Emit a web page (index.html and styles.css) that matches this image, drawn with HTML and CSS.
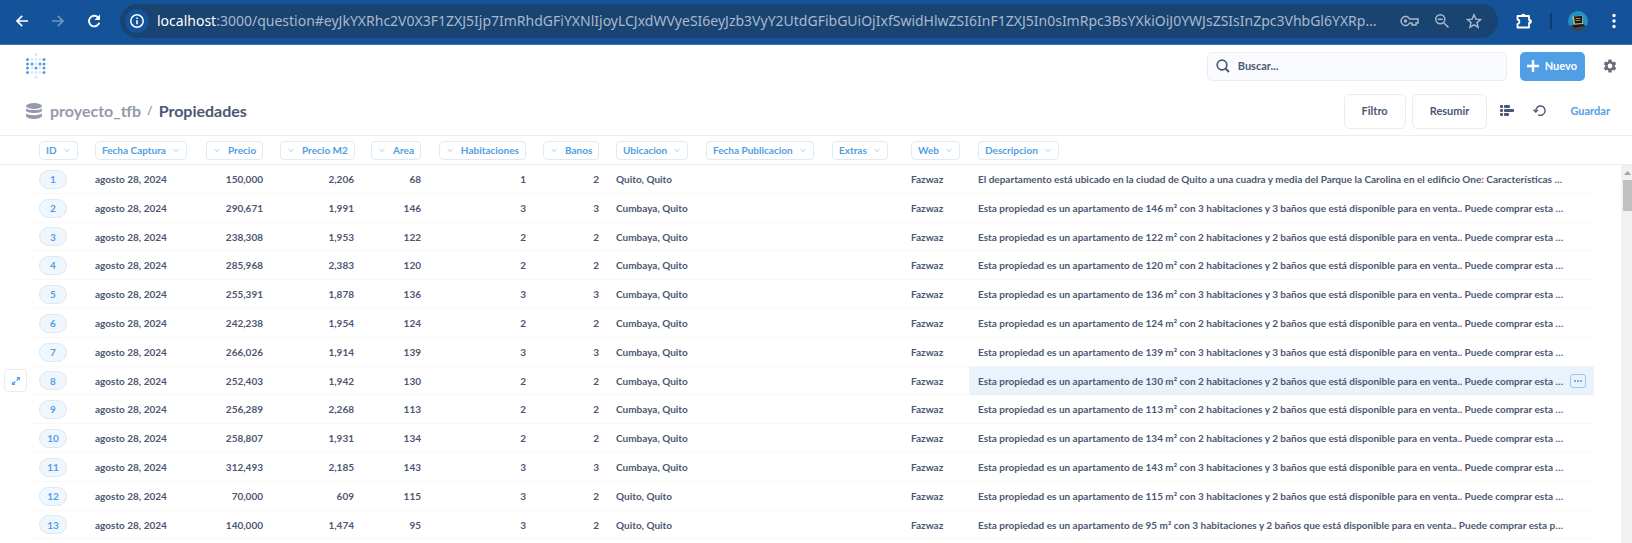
FILE: index.html
```html
<!DOCTYPE html>
<html lang="es">
<head>
<meta charset="utf-8">
<title>Propiedades</title>
<link rel="stylesheet" href="styles.css">
</head>
<body>
<div class="browser">
  <button class="nav-btn" aria-label="Atrás"><svg viewBox="0 0 16 16" width="16" height="16"><path d="M14 8H3M8.200 2.800 3 8l5.200 5.200" fill="none" stroke="currentColor" stroke-width="1.700"/></svg></button>
  <button class="nav-btn dim" aria-label="Adelante"><svg viewBox="0 0 16 16" width="16" height="16"><path d="M2 8h11M7.800 2.800 13 8l-5.200 5.200" fill="none" stroke="currentColor" stroke-width="1.700"/></svg></button>
  <button class="nav-btn" aria-label="Recargar"><svg viewBox="0 0 16 16" width="16" height="16"><path d="M13.300 9.800A5.300 5.300 0 1 1 12 4.300l1 1" fill="none" stroke="currentColor" stroke-width="1.900"/><path d="M14 1.500v5.500H8.500z" fill="currentColor"/></svg></button>
  <div class="omnibox">
    <button class="site-info" aria-label="Información del sitio"><svg viewBox="0 0 16 16" width="16" height="16"><circle cx="8" cy="8" r="6.200" fill="none" stroke="currentColor" stroke-width="1.500"/><path d="M8 7.200v4M8 4.600v1.500" stroke="currentColor" stroke-width="1.600"/></svg></button>
    <div class="url" role="textbox" aria-label="Dirección"><span class="host">localhost</span>:3000/question#eyJkYXRhc2V0X3F1ZXJ5Ijp7ImRhdGFiYXNlIjoyLCJxdWVyeSI6eyJzb3VyY2UtdGFibGUiOjIxfSwidHlwZSI6InF1ZXJ5In0sImRpc3BsYXkiOiJ0YWJsZSIsInZpc3VhbGl6YXRp…</div>
    <button class="omni-btn" aria-label="Contraseñas"><svg viewBox="0 0 20 16" width="20" height="16"><path d="M9.600 6A4.500 4.500 0 1 0 9.600 10H12v2h4v-2h2V6z" fill="none" stroke="currentColor" stroke-width="1.500"/><circle cx="5.500" cy="8" r="1.700" fill="currentColor"/></svg></button>
    <button class="omni-btn" aria-label="Zoom"><svg viewBox="0 0 16 16" width="16" height="16"><path d="M10 10l4.500 4.500M3.800 6.200h5" stroke="currentColor" stroke-width="1.600"/><circle cx="6.300" cy="6.200" r="4.500" fill="none" stroke="currentColor" stroke-width="1.500"/></svg></button>
    <button class="omni-btn" aria-label="Marcador"><svg viewBox="0 0 16 16" width="16" height="16"><path d="M8 1.800l1.900 4.300 4.700.4-3.600 3.100 1.100 4.600L8 11.800l-4.100 2.400L5 9.600 1.400 6.500l4.700-.4z" fill="none" stroke="currentColor" stroke-width="1.400"/></svg></button>
  </div>
  <button class="nav-btn" aria-label="Extensiones"><svg viewBox="0 0 18 18" width="18" height="18"><path d="M2.500 4H14v4h.5a1.500 1.500 0 0 1 0 3H14v4.500H2.500V12c2.500-.3 2.500-4.200 0-4.500z" fill="none" stroke="currentColor" stroke-width="1.800" stroke-linejoin="round"/><path d="M6 4a2.300 2.300 0 0 1 4.600 0zM14 7.500a2.200 2.200 0 0 1 0 4.400z" fill="currentColor"/></svg></button>
  <span class="sep"></span>
  <button class="nav-btn" aria-label="Perfil"><svg viewBox="0 0 20 20" width="20" height="20"><circle cx="10" cy="10" r="10" fill="#2390c0"/><path d="M1 14.500h18a10 10 0 0 1-18 0z" fill="#3c4650"/><path d="M4 5.500 14.500 4.500l.5 9-9 .5z" fill="#b9b4a0"/><path d="M6 5.500l8-.5v7l-7 .5z" fill="#14120c"/><path d="M7.500 7.500h5M7.500 9.500h5" stroke="#c08a22"/><path d="M4 14l11-1 2 2-11 1.500z" fill="#151a1e"/></svg></button>
  <button class="nav-btn" aria-label="Menú"><svg viewBox="0 0 16 16" width="16" height="16" fill="currentColor"><circle cx="8" cy="2.500" r="1.700"/><circle cx="8" cy="8" r="1.700"/><circle cx="8" cy="13.500" r="1.700"/></svg></button>
</div>

<header class="app-bar">
  <a class="logo" href="#" aria-label="Inicio"><svg viewBox="0 0 20 26" width="20" height="26">
    <g fill="#d9e9f9"><circle cx="10" cy="1.500" r="1.400"/><circle cx="6" cy="6.500" r="1.400"/><circle cx="10" cy="6.500" r="1.400"/><circle cx="14" cy="6.500" r="1.400"/><circle cx="10" cy="11" r="1.400"/><circle cx="6" cy="15" r="1.400"/><circle cx="14" cy="15" r="1.400"/><circle cx="6" cy="19.500" r="1.400"/><circle cx="10" cy="19.500" r="1.400"/><circle cx="14" cy="19.500" r="1.400"/><circle cx="10" cy="24" r="1.400"/></g>
    <g fill="#509ee3"><circle cx="1.500" cy="6.500" r="1.500"/><circle cx="1.500" cy="11" r="1.500"/><circle cx="1.500" cy="15" r="1.500"/><circle cx="1.500" cy="19.500" r="1.500"/><circle cx="6" cy="11" r="1.500"/><circle cx="10" cy="15" r="1.500"/><circle cx="14" cy="11" r="1.500"/><circle cx="18" cy="6.500" r="1.500"/><circle cx="18" cy="11" r="1.500"/><circle cx="18" cy="15" r="1.500"/><circle cx="18" cy="19.500" r="1.500"/></g></svg></a>
  <label class="search"><svg viewBox="0 0 14 14" width="14" height="14"><circle cx="6" cy="6" r="4.800" fill="none" stroke="currentColor" stroke-width="1.700"/><path d="M9.500 9.500l3.500 3.500" stroke="currentColor" stroke-width="1.900"/></svg><input type="search" placeholder="Buscar..." aria-label="Buscar"></label>
  <button class="new-btn"><svg viewBox="0 0 12 12" width="12" height="12"><path d="M6 0v12M0 6h12" stroke="currentColor" stroke-width="2.400"/></svg>Nuevo</button>
  <button class="icon-btn gear" aria-label="Ajustes"><svg viewBox="0 0 24 24" width="16" height="16"><path fill="currentColor" d="M19.140 12.940c.040-.3.060-.61.060-.94s-.020-.64-.070-.94l2.030-1.580a.49.49 0 0 0 .12-.61l-1.920-3.320a.49.49 0 0 0-.59-.22l-2.390.96a7 7 0 0 0-1.620-.94l-.36-2.540A.48.48 0 0 0 13.920 2.400h-3.840a.48.48 0 0 0-.48.410l-.36 2.540a7.200 7.200 0 0 0-1.620.94l-2.390-.96a.49.49 0 0 0-.59.220L2.720 8.870a.48.48 0 0 0 .12.610l2.030 1.580a7 7 0 0 0 0 1.880l-2.030 1.580a.49.49 0 0 0-.12.610l1.920 3.320c.12.220.37.290.59.220l2.390-.96c.5.380 1.030.7 1.620.94l.36 2.540c.050.240.240.410.480.410h3.840c.240 0 .440-.17.470-.410l.36-2.540a7 7 0 0 0 1.620-.94l2.390.96c.22.080.47 0 .59-.22l1.920-3.320a.48.48 0 0 0-.12-.610zM12 15.600a3.600 3.600 0 1 1 0-7.200 3.600 3.600 0 0 1 0 7.200z"/></svg></button>
</header>

<div class="title-bar">
  <svg class="db" viewBox="0 0 16 16" width="16" height="16" fill="currentColor"><ellipse cx="8" cy="3" rx="8" ry="3"/><path d="M0 5.400c2.500 2.200 13.500 2.200 16 0v2.400c-1 3-15 3-16 0z"/><path d="M0 10.500c2.500 2.200 13.500 2.200 16 0v2.500c-1 4-15 4-16 0z"/></svg>
  <h1 class="crumbs"><a class="crumb" href="#">proyecto_tfb</a><span class="slash">/</span><span>Propiedades</span></h1>
  <button class="box-btn">Filtro</button>
  <button class="box-btn">Resumir</button>
  <button class="icon-btn editor" aria-label="Editor"><svg viewBox="0 0 14 12" width="14" height="12" fill="currentColor"><rect x="0" y="0" width="3" height="3" rx="1"/><rect x="4" y="0" width="6" height="3" rx="1"/><rect x="0" y="4" width="3" height="3" rx="1"/><rect x="4" y="4" width="10" height="3" rx="1"/><rect x="0" y="8" width="3" height="3" rx="1"/><rect x="4" y="8" width="5" height="3" rx="1"/></svg></button>
  <button class="icon-btn refresh" aria-label="Actualizar"><svg viewBox="0 0 14 14" width="14" height="14"><path d="M2.700 6.800A4.700 4.700 0 1 1 5.200 10.800" fill="none" stroke="currentColor" stroke-width="1.400"/><path d="M.5 5.800l2.300 2.200 2.200-2.200" fill="none" stroke="currentColor" stroke-width="1.300"/></svg></button>
  <button class="save">Guardar</button>
</div>

<main class="grid">
  <div class="scroller">
  <table>
    <colgroup><col class="w-gutter"><col class="w-id"><col class="w-fecha"><col class="w-precio"><col class="w-m2"><col class="w-area"><col class="w-hab"><col class="w-banos"><col class="w-ubi"><col class="w-pub"><col class="w-extras"><col class="w-web"><col><col class="w-end"></colgroup>
    <thead><tr id="head"></tr></thead>
    <tbody id="rows"></tbody>
  </table>
  </div>
  <div class="track" aria-hidden="true"><span class="arrow"></span><span class="thumb"></span></div>
</main>
<script src="app.js"></script>
</body>
</html>
```
FILE: styles.css
```css
* { box-sizing: border-box; }
body {
  margin: 0;
  height: 100vh;
  overflow: hidden;
  display: flex;
  flex-direction: column;
  background: #fff;
  color: #4c5773;
  font: 700 10px/16px Lato, "Noto Sans", sans-serif;
}
button { margin: 0; padding: 0; border: 0; background: none; color: inherit; font: inherit; cursor: pointer; }
a { color: inherit; text-decoration: none; }
svg { display: block; flex: none; }

.browser {
  flex: none;
  display: flex;
  align-items: center;
  height: 45px;
  padding: 0 0 2px 4px;
  background: #14539a;
  border-bottom: 1px solid #3d74b0;
  color: #fff;
}
.nav-btn { flex: none; display: flex; align-items: center; justify-content: center; width: 36px; height: 34px; }
.nav-btn.dim { color: #7195c2; }
.omnibox {
  flex: 1;
  min-width: 0;
  display: flex;
  align-items: center;
  height: 34px;
  margin: 0 8px;
  padding: 0 8px 0 5px;
  border-radius: 17px;
  background: #194371;
  color: #a9b9cd;
}
.site-info { flex: none; display: flex; align-items: center; justify-content: center; width: 24px; height: 24px; border-radius: 12px; background: #14539a; color: #fff; }
.url { flex: 1; min-width: 0; margin-left: 8px; overflow: hidden; white-space: nowrap; font: 400 14px/20px "Noto Sans", sans-serif; }
.host { color: #fff; }
.omni-btn { flex: none; display: flex; align-items: center; justify-content: center; width: 32px; height: 24px; }
.sep { flex: none; width: 2px; height: 16px; margin: 0 8px; background: #0d3b70; }

.app-bar { flex: none; display: flex; align-items: center; height: 42px; padding: 0 14px 0 26px; }
.logo { margin-right: auto; }
.search {
  display: flex;
  align-items: center;
  gap: 8px;
  flex: 0 1 300px;
  height: 29px;
  padding: 0 8px;
  border: 1px solid #eeecec;
  border-radius: 5px;
  background: #f9fbfe;
}
.search input { flex: 1; min-width: 0; padding: 0; border: 0; outline: 0; background: none; color: inherit; font: 700 11px/16px Lato, sans-serif; }
.search input::placeholder { color: #4c5773; opacity: 1; }
.new-btn { display: flex; align-items: center; gap: 6px; height: 29px; margin: 0 17px 0 13px; padding: 0 8px 0 7px; border-radius: 5px; background: #509ee3; color: #fff; font-size: 11px; }
.icon-btn { display: flex; align-items: center; justify-content: center; width: 16px; height: 24px; }
.gear { color: #696e7b; }

.title-bar { flex: none; display: flex; align-items: center; height: 48px; padding: 0 22px 0 26px; }
.db { color: #949aab; }
.crumbs { display: flex; align-items: center; margin: 0 auto 0 8px; font-size: 16px; line-height: 20px; }
.crumb { color: #949aab; }
.slash { margin: 0 6px; color: #949aab; font-size: 12px; }
.box-btn { height: 35px; margin-right: 6px; padding: 0 17px; border: 1px solid #eeecec; border-radius: 5px; font-size: 11px; }
.editor { margin-left: 6px; }
.refresh { margin: 0 22px 0 17px; }
.save { color: #509ee3; font-size: 11px; }

.grid { flex: 1; min-height: 0; display: flex; position: relative; border-top: 1px solid #eeecec; }
.scroller { flex: 1; min-width: 0; overflow: hidden; }
table { width: 100%; table-layout: fixed; border-collapse: separate; border-spacing: 0; }
.w-gutter { width: 30px; }
.w-id { width: 56px; }
.w-fecha { width: 111px; }
.w-precio { width: 74px; }
.w-m2 { width: 91px; }
.w-area { width: 67px; }
.w-hab { width: 105px; }
.w-banos { width: 73px; }
.w-ubi { width: 90px; }
.w-pub { width: 126px; }
.w-extras { width: 79px; }
.w-web { width: 67px; }
.w-end { width: 38px; }
th, td { padding: 0 8px 0 9px; text-align: left; white-space: nowrap; }
th { height: 29px; border-bottom: 1px solid #eeecec; }
td { height: 29px; border-bottom: 1px solid #f8f8f9; }
tr:nth-child(5n+3) td { height: 28px; }
td.gutter, td.end { padding: 0; border-bottom-color: transparent; }
th.num, td.num { text-align: right; }
.head-btn { display: inline-flex; align-items: center; gap: 6px; height: 19px; padding: 0 6px; border: 1px solid #dcebf9; border-radius: 4px; color: #509ee3; vertical-align: middle; }
.num .head-btn { flex-direction: row-reverse; gap: 7px; }
.head-btn svg { color: #cfe3f7; }
.pill { display: flex; align-items: center; justify-content: center; width: 28px; height: 19px; border: 1px solid #d8e9f8; border-radius: 10px; background: #f0f6fd; color: #509ee3; }
.desc { display: flex; align-items: center; justify-content: space-between; }
.desc span { overflow: hidden; text-overflow: ellipsis; }
td.hover { background: #eaf3fb; border-bottom-color: #e4eef7; }
.more { flex: none; display: flex; align-items: center; justify-content: center; width: 16px; height: 14px; border: 1px solid #99c6ef; border-radius: 3px; color: #72b1e8; }
.expand { display: flex; align-items: center; justify-content: center; width: 23px; height: 23px; margin-left: 4px; border: 1px solid #eeecec; border-radius: 4px; background: #fff; color: #509ee3; }
.track { position: absolute; top: 29px; right: 0; bottom: 0; width: 11px; padding: 6px 0 0 2px; background: #f1f1f1; }
.arrow { display: block; height: 4px; margin: 0 1px 5px; background: #a3a3a3; clip-path: polygon(50% 0, 100% 100%, 0 100%); }
.thumb { display: block; height: 31px; background: #c1c1c1; }
```
FILE: app.js
```js
const columns = [
  ["ID"], ["Fecha Captura"], ["Precio", 1], ["Precio M2", 1], ["Area", 1], ["Habitaciones", 1],
  ["Banos", 1], ["Ubicacion"], ["Fecha Publicacion"], ["Extras"], ["Web"], ["Descripcion"]
];
const data = [
  ["150,000", "2,206", 68, 1, 2, "Quito, Quito"],
  ["290,671", "1,991", 146, 3, 3],
  ["238,308", "1,953", 122, 2, 2],
  ["285,968", "2,383", 120, 2, 2],
  ["255,391", "1,878", 136, 3, 3],
  ["242,238", "1,954", 124, 2, 2],
  ["266,026", "1,914", 139, 3, 3],
  ["252,403", "1,942", 130, 2, 2],
  ["256,289", "2,268", 113, 2, 2],
  ["258,807", "1,931", 134, 2, 2],
  ["312,493", "2,185", 143, 3, 3],
  ["70,000", "609", 115, 3, 2, "Quito, Quito"],
  ["140,000", "1,474", 95, 3, 2, "Quito, Quito"]
];
const chevron = '<svg viewBox="0 0 8 8" width="8" height="8"><path d="M1.500 3 4 5.500 6.500 3" fill="none" stroke="currentColor" stroke-width="1.300"/></svg>';
const expand = '<button class="expand" aria-label="Ver detalles"><svg viewBox="0 0 8 8" width="8" height="8"><path d="M4.500 0H8v3.500zM0 4.500V8h3.500z" fill="currentColor"/><path d="M4.600 3.400 7 1M1 7l2.400-2.400" stroke="currentColor" stroke-width="1.400"/></svg></button>';
const more = '<button class="more" aria-label="Más"><svg viewBox="0 0 8 2" width="8" height="2" fill="currentColor"><path d="M0 0h2v2H0zM3 0h2v2H3zM6 0h2v2H6z"/></svg></button>';

document.getElementById("head").innerHTML = "<th></th>" + columns.map(([name, num]) =>
  `<th class="${num ? "num" : ""}"><button class="head-btn">${name}${chevron}</button></th>`).join("") + "<th></th>";

document.getElementById("rows").innerHTML = data.map(([price, m2, area, rooms, baths, place], i) => {
  const tail = i === 12 ? "p…" : "…";
  const text = i === 0
    ? "El departamento está ubicado en la ciudad de Quito a una cuadra y media del Parque la Carolina en el edificio One: Características …"
    : `Esta propiedad es un apartamento de ${area} m² con ${rooms} habitaciones y ${baths} baños que está disponible para en venta.. Puede comprar esta ${tail}`;
  const active = i === 7;
  return `<tr><td class="gutter">${active ? expand : ""}</td>
    <td><a class="pill" href="#">${i + 1}</a></td><td>agosto 28, 2024</td>
    ${[price, m2, area, rooms, baths].map(v => `<td class="num">${v}</td>`).join("")}
    <td>${place || "Cumbaya, Quito"}</td><td></td><td></td><td>Fazwaz</td>
    <td class="${active ? "hover" : ""}"><div class="desc"><span>${text}</span>${active ? more : ""}</div></td><td class="end"></td></tr>`;
}).join("");
```
